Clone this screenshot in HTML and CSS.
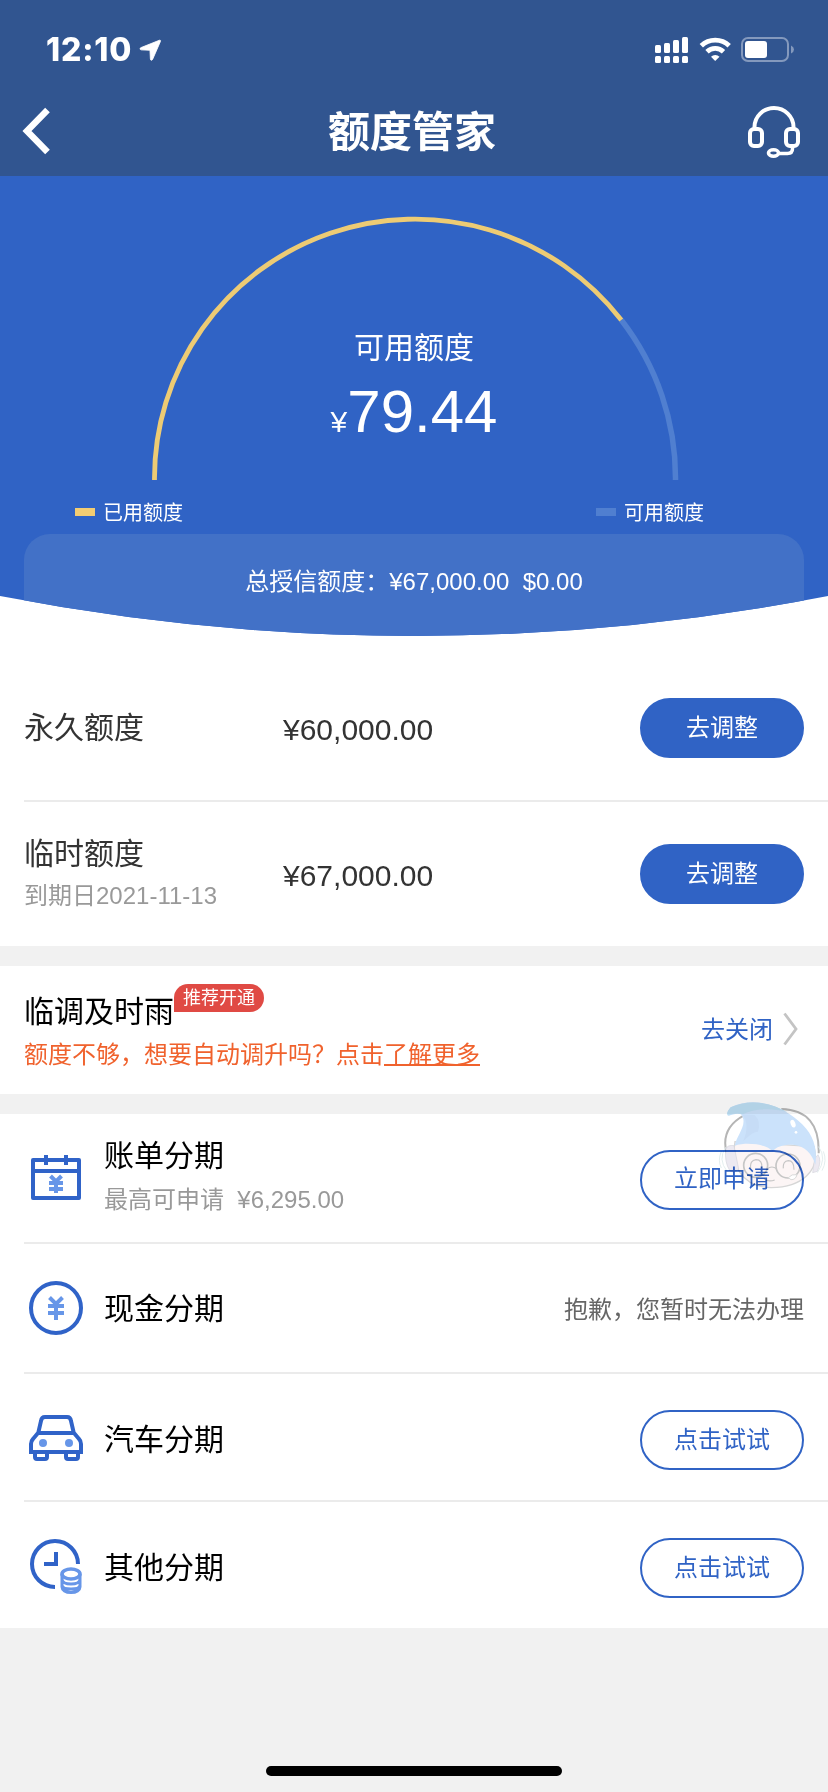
FILE: index.html
```html
<!DOCTYPE html>
<html lang="zh-CN">
<head>
<meta charset="utf-8">
<title>额度管家</title>
<link rel="stylesheet" href="styles.css">
</head>
<body>
<div class="page">
  <header class="header">
    <div class="status">
      <span class="time">12:10</span>
      <svg class="locate" width="23" height="23" viewBox="0 0 22 22"><path d="M19.500 1.200 2 8.200c-1.500.6-1.300 2.100.2 2.200l8.300.4.4 8.300c.1 1.500 1.600 1.700 2.200.2l7.400-17c.4-1-.3-1.300-1-1.100Z" fill="#fff" stroke="#fff" stroke-width=".8"/></svg>
      <svg class="status-icons" width="142" height="30" viewBox="0 0 142 30">
        <g fill="#fff">
          <rect x="1" y="10" width="6" height="8" rx="1.500"/><rect x="10" y="8" width="6" height="10" rx="1.500"/><rect x="19" y="5" width="6" height="13" rx="1.500"/><rect x="28" y="2" width="6" height="16" rx="1.500"/>
          <rect x="1" y="21" width="6" height="7" rx="1.500"/><rect x="10" y="21" width="6" height="7" rx="1.500"/><rect x="19" y="21" width="6" height="7" rx="1.500"/><rect x="28" y="21" width="6" height="7" rx="1.500"/>
          <path d="M61.200 26 57 21.800a6.200 6.200 0 0 1 8.500 0Z"/>
        </g>
        <path d="M47.300 10.800a20 20 0 0 1 27.900 0M53 16.700a12 12 0 0 1 16.500 0" fill="none" stroke="#fff" stroke-width="4.800"/>
        <rect x="88" y="3" width="46" height="23" rx="6" fill="none" stroke="#8499bd" stroke-width="2"/>
        <rect x="91" y="6" width="22" height="17" rx="3" fill="#fff"/>
        <path d="M137 10.500q3 1.500 3 4t-3 4Z" fill="#8499bd"/>
      </svg>
    </div>
    <div class="nav">
      <svg class="back" width="30" height="48" viewBox="0 0 30 48"><path d="M27.500 3 7 24 27.500 45" fill="none" stroke="#fff" stroke-width="6.500"/></svg>
      <h1 class="title">额度管家</h1>
      <svg class="service" width="54" height="54" viewBox="0 0 54 54" fill="none" stroke="#fff" stroke-width="4">
        <path d="M7.500 23v-2a19.500 19 0 0 1 39 0v2" />
        <rect x="3" y="23" width="12" height="17" rx="4"/>
        <rect x="39" y="23" width="12" height="17" rx="4"/>
        <path d="M45.500 40v2.500q0 5-5 5H32" stroke-width="3.500"/>
        <ellipse cx="26.500" cy="47" rx="5" ry="3.200" stroke-width="3.600"/>
      </svg>
    </div>
  </header>

  <section class="hero">
    <div class="gauge">
      <svg class="arc" width="530" height="264" viewBox="0 0 530 264" fill="none">
        <path d="M471.300 104A260.500 259 0 0 1 525.500 264" stroke="#507fd0" stroke-width="5.500"/>
        <path d="M4.500 264A260.500 259 0 0 1 471.300 104" stroke="#edcb74" stroke-width="4.800"/>
      </svg>
      <div class="gauge-label">可用额度</div>
      <div class="gauge-value"><span class="yen">¥</span>79.44</div>
    </div>
    <div class="legend">
      <div class="key"><i class="swatch used"></i>已用额度</div>
      <div class="key"><i class="swatch free"></i>可用额度</div>
    </div>
    <div class="total">总授信额度：¥67,000.00&nbsp; $0.00</div>
  </section>

  <section class="limits">
    <div class="limit first">
      <div class="name">永久额度</div>
      <div class="amount">¥60,000.00</div>
      <button class="btn solid">去调整</button>
    </div>
    <div class="limit second">
      <div class="name">临时额度<small class="sub">到期日2021-11-13</small></div>
      <div class="amount">¥67,000.00</div>
      <button class="btn solid">去调整</button>
    </div>
  </section>

  <section class="auto">
    <div class="auto-text">
      <div class="auto-title">临调及时雨<span class="badge">推荐开通</span></div>
      <div class="hint">额度不够，想要自动调升吗？点击<a class="more">了解更多</a></div>
    </div>
    <a class="close">去关闭</a>
    <svg class="chevron" width="16" height="34" viewBox="0 0 16 34"><path d="M1.500 1.500 13 17 1.500 32.500" fill="none" stroke="#c4c4c4" stroke-width="2.800"/></svg>
  </section>

  <section class="plans">
    <div class="plan bill">
      <svg class="icon" width="56" height="60" viewBox="0 0 56 60">
        <rect x="5" y="10" width="46" height="38" fill="none" stroke="#3063c8" stroke-width="4" stroke-linejoin="round"/>
        <path d="M5 21h46M18 5v10M38 5v10" stroke="#3063c8" stroke-width="4"/>
        <path d="m22.500 26 5.500 5.500 5.500-5.500M21 33h14M21 39h14M28 31v12" fill="none" stroke="#6796e8" stroke-width="4"/>
      </svg>
      <div class="plan-name">账单分期<small class="sub">最高可申请&nbsp; ¥6,295.00</small></div>
      <button class="btn">立即申请</button>
    </div>
    <div class="plan">
      <svg class="icon" width="56" height="60" viewBox="0 0 56 60">
        <circle cx="28" cy="29" r="25" fill="none" stroke="#3063c8" stroke-width="4"/>
        <path d="m21.500 18.500 6.500 6.500 6.500-6.500M20 27h16M20 34h16M28 25v16" fill="none" stroke="#6796e8" stroke-width="4"/>
      </svg>
      <div class="plan-name">现金分期</div>
      <span class="note">抱歉，您暂时无法办理</span>
    </div>
    <div class="plan car">
      <svg class="icon" width="56" height="60" viewBox="0 0 56 60" fill="none" stroke="#3063c8" stroke-width="4">
        <path d="M10 24 13 11q.5-4 4-4h22q3.500 0 4 4l3 13M9.500 23h37M10 23l-5 6q-2 2-2 5v8h50v-8q0-3-2-5l-5-6"/>
        <path d="M7 43v4q0 2 2 2h8q2 0 2-2v-4M38 43v4q0 2 2 2h8q2 0 2-2v-4"/>
        <circle cx="15" cy="33" r="4" fill="#6796e8" stroke="none"/><circle cx="41" cy="33" r="4" fill="#6796e8" stroke="none"/>
      </svg>
      <div class="plan-name">汽车分期</div>
      <button class="btn">点击试试</button>
    </div>
    <div class="plan other">
      <svg class="icon" width="56" height="60" viewBox="0 0 56 60" fill="none" stroke-width="4">
        <path d="M27 49A23 23 0 1 1 50 26M28 14v12H16" stroke="#3063c8"/>
        <g stroke="#6796e8" stroke-width="3.600"><ellipse cx="43" cy="36" rx="9" ry="5"/><path d="M34 36v13c0 3 3.500 5.500 9 5.500s9-2.500 9-5.500V36M34 41c0 3 3.500 5 9 5s9-2 9-5M34 47c0 2.500 3.500 4 9 4s9-1.500 9-4" stroke-width="3"/></g>
      </svg>
      <div class="plan-name">其他分期</div>
      <button class="btn">点击试试</button>
    </div>
  </section>

  <footer class="footer"><div class="home-bar"></div></footer>

  <svg class="mascot" width="112" height="96" viewBox="474 414 336 288">
    <path d="M552 466Q480 505 500 580M664 447Q780 450 776 580" fill="none" stroke="#b5b5b5" stroke-width="6"/>
    <path d="M497 562q-24 36 4 72M484 574q-12 28 0 50M776 560q26 36-4 78M790 574q12 28-4 58" fill="none" stroke="#e3eeee" stroke-width="3"/>
    <path d="M525 545C514 612 540 680 634 683C725 682 782 632 762 560Z" fill="#fcf5f5" stroke="#d6d6d6" stroke-width="4"/>
    <path d="M498 566q5-12 24-9l14 70q-12 14-26 6Q492 606 498 566ZM764 596l10-12q12 18-2 50l-14 4Z" fill="#ece9f1" stroke="#d4d4dc" stroke-width="2"/>
    <path d="M524 557C530 524 566 492 543 463C532 458 519 463 507 467Q496 462 512 442C580 408 660 434 715 482C757 517 774 560 766 614C756 580 733 558 704 555C675 552 650 559 638 574C616 550 559 547 524 557Z" fill="#cbe2fb"/>
    <path d="M504 467Q496 460 512 442C570 415 635 429 682 456C630 442 585 446 548 463Q526 457 504 467Z" fill="#bddff4"/>
    <path d="M546 463q25 30 4 80 30-30 44-28 10-30-10-50Z" fill="#c6dcf6"/>
    <ellipse cx="699" cy="491" rx="7" ry="12" transform="rotate(-20 699 491)" fill="#fff"/><circle cx="708" cy="517" r="4" fill="#fff"/>
    <g fill="none" stroke="#c6c6c6" stroke-width="5"><circle cx="587" cy="616" r="36"/><circle cx="684" cy="618" r="36"/><path d="M621 626q15-10 29 0M572 625q-3-24 16-26 20 0 17 26M670 625q-2-22 15-23 17 0 17 27M612 657q15 10 32 3" stroke-width="3.500"/></g>
    <path d="M685 653q10-12 26-9-4 16-18 15Z" fill="#fff" stroke="#d9d9d9" stroke-width="3"/>
  </svg>
</div>
</body>
</html>
```

FILE: styles.css
```css
* { box-sizing: border-box; }

body {
  margin: 0;
  background: #f1f1f1;
  font-family: "Liberation Sans", "Noto Sans CJK SC", sans-serif;
  color: #333;
}

svg { display: block; flex: none; }

.page {
  position: relative;
  display: flex;
  flex-direction: column;
  width: 828px;
  height: 1792px;
  overflow: hidden;
  background: linear-gradient(#fff 640px, #f1f1f1 640px);
}

.header { height: 176px; background: #315590; color: #fff; }

.status {
  display: flex;
  align-items: center;
  height: 88px;
  padding: 12px 32px 0 46px;
}
.time {
  width: 86px;
  font: 800 32px/40px Inter, sans-serif;
  letter-spacing: 0.8px;
  white-space: nowrap;
}
.locate { margin-left: 7px; }
.status-icons { margin-left: auto; }

.nav {
  display: flex;
  align-items: center;
  justify-content: space-between;
  height: 88px;
  padding: 0 27px 0 20px;
}
.back { margin-bottom: 2px; }
.service { margin-top: 2px; }
.title { margin: 2px 0 0 27px; font-size: 42px; font-weight: 700; line-height: 60px; }

.hero {
  height: 460px;
  background: #3063c5;
  color: #fff;
  clip-path: path("M0 0H828V420Q414 500 0 420Z");
}
.gauge {
  position: relative;
  height: 304px;
  padding-top: 150px;
  text-align: center;
}
.arc { position: absolute; left: 149.500px; top: 40px; }
.gauge-label { font-size: 30px; line-height: 44px; }
.gauge-value { margin-top: 6px; font-size: 60px; line-height: 72px; }
.yen { font-size: 30px; }

.legend {
  display: flex;
  justify-content: space-between;
  height: 54px;
  padding: 18px 124px 0 75px;
  font-size: 20px;
  line-height: 30px;
}
.key { display: flex; align-items: center; gap: 8px; height: 30px; }
.swatch { width: 20px; height: 8px; margin-bottom: 3px; }
.used { background: #f3cd72; }
.free { background: #507fd0; }

.total {
  height: 102px;
  margin: 0 24px;
  padding-top: 30px;
  border-radius: 26px 26px 0 0;
  background: #4271c7;
  font-size: 24px;
  line-height: 36px;
  text-align: center;
}

.limits, .auto, .plans { background: #fff; }
.limits { height: 310px; margin-bottom: 20px; }

.limit {
  display: grid;
  grid-template-columns: 259px 1fr 164px;
  align-items: center;
  margin-left: 24px;
  padding-right: 24px;
}
.first { height: 166px; padding-top: 20px; border-bottom: 2px solid #ebebeb; }
.second { height: 144px; }
.name { font-size: 30px; line-height: 44px; }
.amount { padding-top: 4px; font-size: 30px; line-height: 40px; }
.sub { display: block; font-size: 24px; line-height: 36px; color: #999; }
.second .name { padding-bottom: 2px; }
.second .sub { margin-top: 2px; }

.btn {
  flex: none;
  width: 164px;
  height: 60px;
  padding: 0 0 1px;
  border: 2px solid #3063c5;
  border-radius: 30px;
  background: none;
  color: #3063c5;
  font: 24px/36px "Liberation Sans", "Noto Sans CJK SC", sans-serif;
}
.solid { background: #3063c5; color: #fff; }

.auto {
  display: flex;
  align-items: center;
  height: 128px;
  margin-bottom: 20px;
  padding: 2px 29px 0 24px;
}
.auto-text { flex: 1; }
.auto-title { display: flex; font-size: 30px; line-height: 44px; color: #000; }
.badge {
  align-self: flex-start;
  width: 90px;
  height: 28px;
  margin-top: -6px;
  border-radius: 14px 14px 14px 0;
  background: #e04a44;
  color: #fff;
  font-size: 18px;
  line-height: 28px;
  text-align: center;
}
.hint { margin-top: 3px; font-size: 24px; line-height: 36px; color: #f0622d; }
.more { text-decoration: underline; text-decoration-thickness: 2px; }
.close { margin: 0 10px 8px 0; font-size: 24px; color: #3063c5; }
.chevron { margin-bottom: 4px; }

.plan {
  display: flex;
  align-items: center;
  height: 130px;
  margin-left: 24px;
  padding: 2px 24px 0 4px;
  border-bottom: 2px solid #ebebeb;
}
.bill { padding-top: 3px; }
.car { height: 128px; padding-top: 6px; }
.other { height: 126px; padding-top: 6px; border-bottom: 0; }
.plan-name { flex: 1; margin-left: 20px; font-size: 30px; line-height: 44px; color: #000; }
.bill .plan-name { padding-bottom: 8px; }
.bill .sub { margin-top: 4px; }
.note { padding-bottom: 4px; font-size: 24px; color: #666; }

.footer { display: flex; flex: 1; align-items: flex-end; justify-content: center; padding-bottom: 16px; }
.home-bar { width: 296px; height: 10px; border-radius: 5px; background: #000; }

.mascot { position: absolute; left: 718px; top: 1098px; mix-blend-mode: multiply; }
```
